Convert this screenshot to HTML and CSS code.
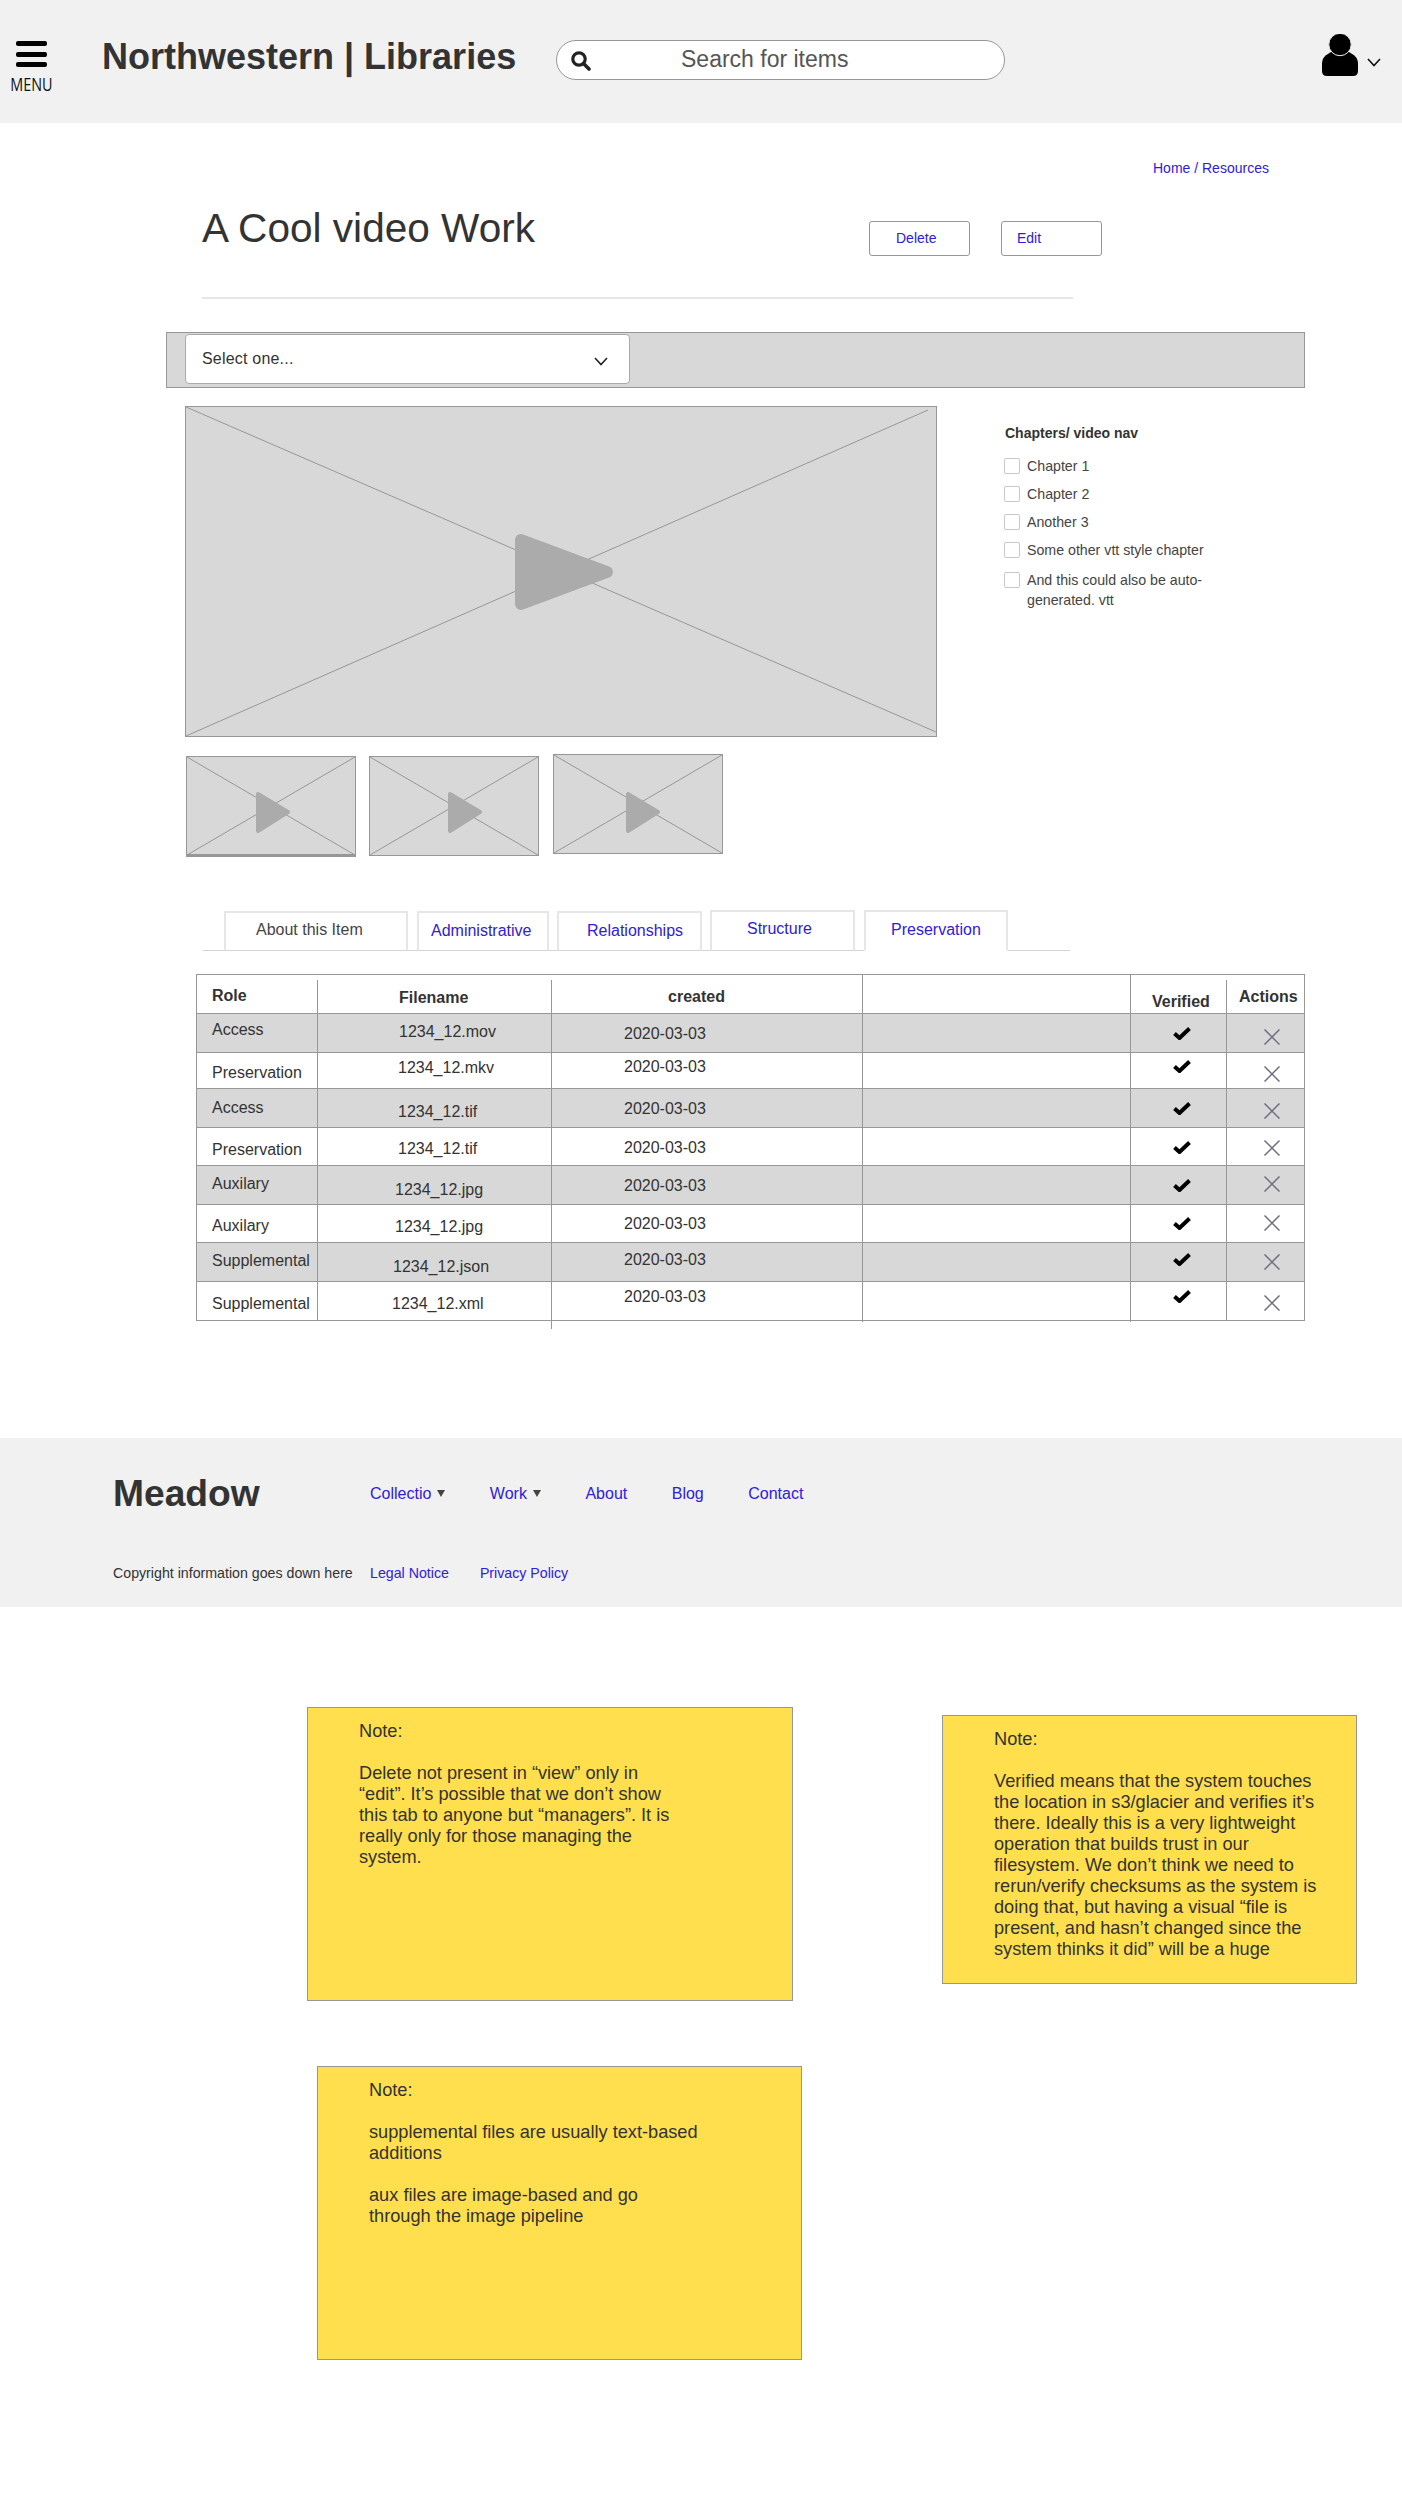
FILE: index.html
```html
<!DOCTYPE html>
<html lang="en">
<head>
  <meta charset="UTF-8" />
  <title>A Cool video Work</title>
  <link rel="stylesheet" href="styles.css">
</head>
<body>

  <header class="topbar">
    <div class="menu">
      <svg class="menu-icon" width="31" height="26" viewBox="0 0 31 26">
        <rect x="0" y="0" width="31" height="5" rx="2"/>
        <rect x="0" y="11" width="31" height="5" rx="2"/>
        <rect x="0" y="21" width="31" height="5" rx="2"/>
      </svg>
      <span class="menu-label">MENU</span>
    </div>
    <div class="logo">Northwestern | Libraries</div>
    <div class="search">
      <svg class="search-icon" width="20" height="20" viewBox="0 0 20 20">
        <circle cx="8" cy="8" r="6.2" fill="none" stroke="#222" stroke-width="3.2"/>
        <line x1="12.5" y1="12.5" x2="18" y2="18" stroke="#222" stroke-width="3.6" stroke-linecap="round"/>
      </svg>
      <span class="search-text">Search for items</span>
    </div>
    <div class="user">
      <svg width="36" height="42" viewBox="0 0 36 42">
        <path d="M0 30C0 24 3 21 11 17L25 17C33 21 36 24 36 30L36 37Q36 42 31 42L5 42Q0 42 0 37Z"/>
        <ellipse cx="18" cy="10.5" rx="11.2" ry="11.2" stroke="#f1f1f1" stroke-width="1"/>
      </svg>
      <svg class="chev" width="14" height="9" viewBox="0 0 14 9">
        <polyline points="1,1 7,7.5 13,1" fill="none" stroke="#111" stroke-width="1.6"/>
      </svg>
    </div>
  </header>

  <div class="crumbs">Home / Resources</div>

  <div class="title-row">
    <h1>A Cool video Work</h1>
    <a class="btn btn-delete">Delete</a>
    <a class="btn btn-edit">Edit</a>
  </div>

  <div class="select-bar">
    <div class="select">
      <span>Select one...</span>
      <svg width="14" height="9" viewBox="0 0 14 9">
        <polyline points="1,1 7,7.5 13,1" fill="none" stroke="#222" stroke-width="1.6"/>
      </svg>
    </div>
  </div>

  <div class="video-row">
    <svg class="video" width="752" height="331" viewBox="0 0 752 331">
      <rect x="0.5" y="0.5" width="751" height="330" fill="#d8d8d8" stroke="#979797"/>
      <line x1="1" y1="1" x2="751" y2="326" stroke="#979797"/>
      <line x1="1" y1="330" x2="743" y2="4" stroke="#979797"/>
      <polygon points="336,134 336,198 422,166" fill="#ababab" stroke="#ababab" stroke-width="12" stroke-linejoin="round"/>
    </svg>
    <div class="chapters">
      <h3>Chapters/ video nav</h3>
      <ul>
        <li><span class="box"></span><span>Chapter 1</span></li>
        <li><span class="box"></span><span>Chapter 2</span></li>
        <li><span class="box"></span><span>Another 3</span></li>
        <li class="wide"><span class="box"></span><span>Some other vtt style chapter</span></li>
        <li><span class="box"></span><span>And this could also be auto-<br>generated. vtt</span></li>
      </ul>
    </div>
  </div>

  <div class="thumbs">
    <svg class="thumb thumb-first" width="170" height="101" viewBox="0 0 170 101">
      <rect x="0.5" y="0.5" width="169" height="99" fill="#d8d8d8" stroke="#979797"/>
      <line x1="1" y1="1" x2="169" y2="99" stroke="#979797"/>
      <line x1="1" y1="99" x2="169" y2="1" stroke="#979797"/>
      <rect x="0" y="98" width="170" height="3" fill="#979797"/>
      <polygon points="72,38 72,75 102,56" fill="#ababab" stroke="#ababab" stroke-width="4" stroke-linejoin="round"/>
    </svg>
    <svg class="thumb thumb-second" width="170" height="100" viewBox="0 0 170 100">
      <rect x="0.5" y="0.5" width="169" height="99" fill="#d8d8d8" stroke="#979797"/>
      <line x1="1" y1="1" x2="169" y2="99" stroke="#979797"/>
      <line x1="1" y1="99" x2="169" y2="1" stroke="#979797"/>
      <polygon points="81,38 81,75 111,56" fill="#ababab" stroke="#ababab" stroke-width="4" stroke-linejoin="round"/>
    </svg>
    <svg class="thumb thumb-third" width="170" height="100" viewBox="0 0 170 100">
      <rect x="0.5" y="0.5" width="169" height="99" fill="#d8d8d8" stroke="#979797"/>
      <line x1="1" y1="1" x2="169" y2="99" stroke="#979797"/>
      <line x1="1" y1="99" x2="169" y2="1" stroke="#979797"/>
      <polygon points="75,40 75,77 105,58" fill="#ababab" stroke="#ababab" stroke-width="4" stroke-linejoin="round"/>
    </svg>
  </div>

  <div class="tabs">
    <div class="tab tab-about">About this Item</div>
    <div class="tab tab-admin link">Administrative</div>
    <div class="tab tab-rel link">Relationships</div>
    <div class="tab tab-struct link">Structure</div>
    <div class="tab tab-pres link">Preservation</div>
  </div>

  <table class="files">
    <colgroup>
      <col class="c-role"><col class="c-name"><col class="c-date"><col class="c-blank"><col class="c-ver"><col class="c-act">
    </colgroup>
    <thead>
      <tr class="h39">
        <th class="gap t10 role">Role</th>
        <th class="gap t12 in81">Filename</th>
        <th class="t11 in116">created</th>
        <th></th>
        <th class="gap t16 in21">Verified</th>
        <th class="t11 in12">Actions</th>
      </tr>
    </thead>
    <tbody>
      <tr class="h39 shade">
        <td class="t5 role">Access</td>
        <td class="t7 in81">1234_12.mov</td>
        <td class="t9 in72">2020-03-03</td>
        <td></td>
        <td class="t12 in42"><svg class="check" width="18" height="14" viewBox="0 0 18 14"><path d="M1.5 7.5L6.5 12L16.5 2.5"/></svg></td>
        <td class="t15 in37"><svg class="cross" width="16" height="16" viewBox="0 0 16 16"><path d="M0.5 0.5L15.5 15.5M15.5 0.5L0.5 15.5"/></svg></td>
      </tr>
      <tr class="h36">
        <td class="t9 role">Preservation</td>
        <td class="t4 in80">1234_12.mkv</td>
        <td class="t3 in72">2020-03-03</td>
        <td></td>
        <td class="t6 in42"><svg class="check" width="18" height="14" viewBox="0 0 18 14"><path d="M1.5 7.5L6.5 12L16.5 2.5"/></svg></td>
        <td class="t13 in37"><svg class="cross" width="16" height="16" viewBox="0 0 16 16"><path d="M0.5 0.5L15.5 15.5M15.5 0.5L0.5 15.5"/></svg></td>
      </tr>
      <tr class="h39 shade">
        <td class="t8 role">Access</td>
        <td class="t12 in80">1234_12.tif</td>
        <td class="t9 in72">2020-03-03</td>
        <td></td>
        <td class="t12 in42"><svg class="check" width="18" height="14" viewBox="0 0 18 14"><path d="M1.5 7.5L6.5 12L16.5 2.5"/></svg></td>
        <td class="t14 in37"><svg class="cross" width="16" height="16" viewBox="0 0 16 16"><path d="M0.5 0.5L15.5 15.5M15.5 0.5L0.5 15.5"/></svg></td>
      </tr>
      <tr class="h38">
        <td class="t11 role">Preservation</td>
        <td class="t10 in80">1234_12.tif</td>
        <td class="t9 in72">2020-03-03</td>
        <td></td>
        <td class="t12 in42"><svg class="check" width="18" height="14" viewBox="0 0 18 14"><path d="M1.5 7.5L6.5 12L16.5 2.5"/></svg></td>
        <td class="t12 in37"><svg class="cross" width="16" height="16" viewBox="0 0 16 16"><path d="M0.5 0.5L15.5 15.5M15.5 0.5L0.5 15.5"/></svg></td>
      </tr>
      <tr class="h39 shade">
        <td class="t7 role">Auxilary</td>
        <td class="t13 in77">1234_12.jpg</td>
        <td class="t9 in72">2020-03-03</td>
        <td></td>
        <td class="t12 in42"><svg class="check" width="18" height="14" viewBox="0 0 18 14"><path d="M1.5 7.5L6.5 12L16.5 2.5"/></svg></td>
        <td class="t10 in37"><svg class="cross" width="16" height="16" viewBox="0 0 16 16"><path d="M0.5 0.5L15.5 15.5M15.5 0.5L0.5 15.5"/></svg></td>
      </tr>
      <tr class="h38">
        <td class="t10 role">Auxilary</td>
        <td class="t11 in77">1234_12.jpg</td>
        <td class="t8 in72">2020-03-03</td>
        <td></td>
        <td class="t11 in42"><svg class="check" width="18" height="14" viewBox="0 0 18 14"><path d="M1.5 7.5L6.5 12L16.5 2.5"/></svg></td>
        <td class="t10 in37"><svg class="cross" width="16" height="16" viewBox="0 0 16 16"><path d="M0.5 0.5L15.5 15.5M15.5 0.5L0.5 15.5"/></svg></td>
      </tr>
      <tr class="h39 shade">
        <td class="t7 role">Supplemental</td>
        <td class="t13 in75">1234_12.json</td>
        <td class="t6 in72">2020-03-03</td>
        <td></td>
        <td class="t9 in42"><svg class="check" width="18" height="14" viewBox="0 0 18 14"><path d="M1.5 7.5L6.5 12L16.5 2.5"/></svg></td>
        <td class="t11 in37"><svg class="cross" width="16" height="16" viewBox="0 0 16 16"><path d="M0.5 0.5L15.5 15.5M15.5 0.5L0.5 15.5"/></svg></td>
      </tr>
      <tr class="h39">
        <td class="t11 role">Supplemental</td>
        <td class="t11 in74 overhang">1234_12.xml</td>
        <td class="t4 in72 overhang tick">2020-03-03</td>
        <td class="overhang tick"></td>
        <td class="t7 in42"><svg class="check" width="18" height="14" viewBox="0 0 18 14"><path d="M1.5 7.5L6.5 12L16.5 2.5"/></svg></td>
        <td class="t13 in37"><svg class="cross" width="16" height="16" viewBox="0 0 16 16"><path d="M0.5 0.5L15.5 15.5M15.5 0.5L0.5 15.5"/></svg></td>
      </tr>
    </tbody>
  </table>

  <footer class="footer">
    <div class="foot-top">
      <div class="foot-name">Meadow</div>
      <nav class="foot-nav">
        <a class="link">Collectio<i class="caret"></i></a>
        <a class="link">Work<i class="caret caret-work"></i></a>
        <a class="link">About</a>
        <a class="link">Blog</a>
        <a class="link">Contact</a>
      </nav>
    </div>
    <div class="foot-bottom">
      <div class="copy">Copyright information goes down here</div>
      <a class="link">Legal Notice</a>
      <a class="link">Privacy Policy</a>
    </div>
  </footer>

  <div class="notes-top">
    <div class="note note-delete">
      <p>Note:</p>
      <p>Delete not present in “view” only in<br>“edit”. It’s possible that we don’t show<br>this tab to anyone but “managers”. It is<br>really only for those managing the<br>system.</p>
    </div>
    <div class="note note-verified">
      <p>Note:</p>
      <p>Verified means that the system touches<br>the location in s3/glacier and verifies it’s<br>there. Ideally this is a very lightweight<br>operation that builds trust in our<br>filesystem. We don’t think we need to<br>rerun/verify checksums as the system is<br>doing that, but having a visual “file is<br>present, and hasn’t changed since the<br>system thinks it did” will be a huge</p>
    </div>
  </div>

  <div class="note note-files">
    <p>Note:</p>
    <p>supplemental files are usually text-based<br>additions</p>
    <p>aux files are image-based and go<br>through the image pipeline</p>
  </div>

</body>
</html>
```

FILE: styles.css
```css
* {
  box-sizing: border-box;
}
body {
  margin: 0;
  font-family: "Liberation Sans", Arial, sans-serif;
  color: #333;
  background: #fff;
  padding-bottom: 160px;
}
.link {
  color: #2f20d8;
}

/* top bar */
.topbar {
  display: flex;
  align-items: flex-start;
  height: 123px;
  background: #f1f1f1;
}
.menu {
  width: 47px;
  margin: 41px 0 0 8px;
  display: flex;
  flex-direction: column;
  align-items: center;
}
.menu-icon {
  display: block;
}
.menu-label {
  font-family: "Open Sans", sans-serif;
  font-size: 18px;
  line-height: 20px;
  margin-top: 7px;
  color: #111;
  transform: scaleX(.8);
}
.logo {
  margin: 36px 0 0 47px;
  width: 454px;
  font-size: 36px;
  line-height: 42px;
  font-weight: bold;
}
.search {
  width: 449px;
  height: 40px;
  margin-top: 40px;
  display: flex;
  align-items: center;
  padding-left: 14px;
  background: #fff;
  border: 1px solid #979797;
  border-radius: 20px;
}
.search-icon {
  display: block;
  margin-top: 1px;
}
.search-text {
  margin: -2px 0 0 90px;
  font-size: 23px;
  color: #555;
}
.user {
  margin: 34px 21px 0 auto;
  display: flex;
  align-items: flex-start;
}
.user svg:first-child {
  display: block;
}
.chev {
  margin: 24px 0 0 9px;
}

/* heading */
.crumbs {
  margin: 37px 0 0 1153px;
  font-size: 14px;
  line-height: 16px;
  color: #2f20d8;
}
.title-row {
  display: flex;
  align-items: flex-start;
  width: 871px;
  height: 93px;
  margin: 30px 0 0 202px;
  border-bottom: 2px solid #e6e6e6;
}
h1 {
  flex: none;
  margin: -1px 0 0;
  width: 667px;
  font-size: 40.6px;
  line-height: 46px;
  font-weight: normal;
}
.btn {
  flex: none;
  display: block;
  width: 101px;
  height: 35px;
  margin-top: 15px;
  border: 1px solid #979797;
  border-radius: 3px;
  font-size: 14px;
  line-height: 33px;
  color: #2f20d8;
}
.btn-delete {
  padding-left: 26px;
}
.btn-edit {
  margin-left: 31px;
  padding-left: 15px;
}

/* select bar */
.select-bar {
  width: 1139px;
  height: 56px;
  margin: 33px 0 0 166px;
  padding: 1px 0 0 18px;
  background: #d8d8d8;
  border: 1px solid #979797;
}
.select {
  display: flex;
  align-items: center;
  justify-content: space-between;
  width: 445px;
  height: 50px;
  padding: 0 21px 0 16px;
  background: #fff;
  border: 1px solid #aaa;
  border-radius: 4px;
  font-size: 16px;
  letter-spacing: .2px;
}
.select svg {
  margin-top: 4px;
}

/* video */
.video-row {
  display: flex;
  align-items: flex-start;
  margin: 18px 0 0 185px;
}
.video {
  display: block;
}
.chapters {
  margin: 18px 0 0 67px;
  font-size: 14.2px;
  color: #444;
}
.chapters h3 {
  margin: 0;
  padding-left: 1px;
  font-size: 14px;
  line-height: 18px;
  color: #333;
}
.chapters ul {
  list-style: none;
  margin: 16px 0 0;
  padding: 0;
}
.chapters li {
  display: flex;
  align-items: flex-start;
  gap: 7px;
  min-height: 28px;
  line-height: 20px;
}
.chapters li.wide {
  min-height: 30px;
}
.chapters li span:last-child {
  margin-top: -2px;
}
.box {
  flex: none;
  width: 16px;
  height: 16px;
  background: #fff;
  border: 1px solid #c8c8c8;
  border-radius: 2px;
}
.thumbs {
  display: flex;
  align-items: flex-start;
  margin: 17px 0 0 186px;
}
.thumb {
  display: block;
}
.thumb-first {
  margin-top: 2px;
}
.thumb-second {
  margin: 2px 0 0 13px;
}
.thumb-third {
  margin-left: 14px;
}

/* tabs */
.tabs {
  display: flex;
  align-items: flex-end;
  width: 867px;
  height: 42px;
  margin: 52px 0 0 203px;
  border-bottom: 1px solid #d4d4d4;
}
.tab {
  height: 41px;
  margin-bottom: -1px;
  border: 2px solid #e6e6e6;
  border-bottom: 1px solid #d4d4d4;
  font-size: 16px;
  line-height: 36px;
}
.tab-about {
  width: 184px;
  height: 40px;
  margin-left: 21px;
  padding-left: 30px;
  line-height: 34px;
  color: #444;
}
.tab-admin {
  width: 132px;
  height: 40px;
  margin-left: 9px;
  padding-left: 12px;
}
.tab-rel {
  width: 145px;
  height: 40px;
  margin-left: 8px;
  padding-left: 28px;
}
.tab-struct {
  width: 145px;
  margin-left: 8px;
  padding-left: 35px;
  line-height: 34px;
}
.tab-pres {
  width: 144px;
  margin-left: 9px;
  padding-left: 25px;
  border-bottom-color: #fff;
}

/* file table */
.files {
  table-layout: fixed;
  width: 1109px;
  margin: 23px 0 0 196px;
  border-collapse: separate;
  border-spacing: 0;
  border: 1px solid #979797;
  border-bottom: 0;
  font-size: 16px;
  line-height: 22px;
}
.c-role { width: 121px; }
.c-name { width: 234px; }
.c-date { width: 311px; }
.c-blank { width: 268px; }
.c-ver { width: 96px; }
.c-act { width: 77px; }
.files th,
.files td {
  position: relative;
  padding: 0;
  vertical-align: top;
  text-align: left;
  border-right: 1px solid #979797;
  border-bottom: 1px solid #979797;
}
.files th:last-child,
.files td:last-child {
  border-right: 0;
}
.files th {
  font-weight: bold;
}
.h36 td { height: 36px; }
.h38 td { height: 38px; }
.h39 td, .h39 th { height: 39px; }
.shade td {
  background: #d8d8d8;
}
.files .role { padding-left: 15px; }
.gap::after {
  content: "";
  position: absolute;
  top: 0;
  right: -1px;
  width: 1px;
  height: 5px;
  background: #fff;
}
.overhang::after {
  content: "";
  position: absolute;
  right: -1px;
  bottom: -9px;
  width: 1px;
  height: 8px;
  background: #979797;
}
.overhang.tick::after {
  bottom: -2px;
  height: 1px;
}
.check {
  display: block;
  fill: none;
  stroke: #000;
  stroke-width: 4;
}
.cross {
  display: block;
  fill: none;
  stroke: #6d6d80;
  stroke-width: 1.5;
}
.files .t3 { padding-top: 3px; }
.files .t4 { padding-top: 4px; }
.files .t5 { padding-top: 5px; }
.files .t6 { padding-top: 6px; }
.files .t7 { padding-top: 7px; }
.files .t8 { padding-top: 8px; }
.files .t9 { padding-top: 9px; }
.files .t10 { padding-top: 10px; }
.files .t11 { padding-top: 11px; }
.files .t12 { padding-top: 12px; }
.files .t13 { padding-top: 13px; }
.files .t14 { padding-top: 14px; }
.files .t15 { padding-top: 15px; }
.files .t16 { padding-top: 16px; }
.files .in12 { padding-left: 12px; }
.files .in21 { padding-left: 21px; }
.files .in37 { padding-left: 37px; }
.files .in42 { padding-left: 42px; }
.files .in72 { padding-left: 72px; }
.files .in74 { padding-left: 74px; }
.files .in75 { padding-left: 75px; }
.files .in77 { padding-left: 77px; }
.files .in80 { padding-left: 80px; }
.files .in81 { padding-left: 81px; }
.files .in116 { padding-left: 116px; }

/* footer */
.footer {
  height: 169px;
  margin-top: 117px;
  padding: 36px 0 0 113px;
  background: #f1f1f1;
}
.foot-top {
  display: flex;
  align-items: center;
  height: 40px;
}
.foot-name {
  width: 257px;
  margin-top: -2px;
  font-size: 37.2px;
  font-weight: bold;
}
.foot-nav {
  display: flex;
  gap: 44.5px;
  font-size: 16px;
}
.caret {
  display: inline-block;
  margin-left: 6px;
  vertical-align: 2px;
  border-left: 4.5px solid transparent;
  border-right: 4.5px solid transparent;
  border-top: 7px solid #444;
}
.foot-bottom {
  display: flex;
  margin-top: 49px;
  font-size: 14.2px;
  line-height: 20px;
}
.copy {
  width: 257px;
}
.foot-bottom a + a {
  margin-left: 31px;
}

/* sticky notes */
.notes-top {
  display: flex;
  align-items: flex-start;
  margin: 100px 0 0 307px;
}
.note {
  padding: 13px 0 0 51px;
  background: #ffdf4d;
  border: 1px solid #979797;
  font-size: 18.2px;
  line-height: 21px;
  color: #333;
}
.note p {
  margin: 0 0 21px;
}
.note-delete {
  width: 486px;
  height: 294px;
}
.note-verified {
  width: 415px;
  height: 269px;
  margin: 8px 0 0 149px;
}
.note-files {
  width: 485px;
  height: 294px;
  margin: 65px 0 0 317px;
}
```
